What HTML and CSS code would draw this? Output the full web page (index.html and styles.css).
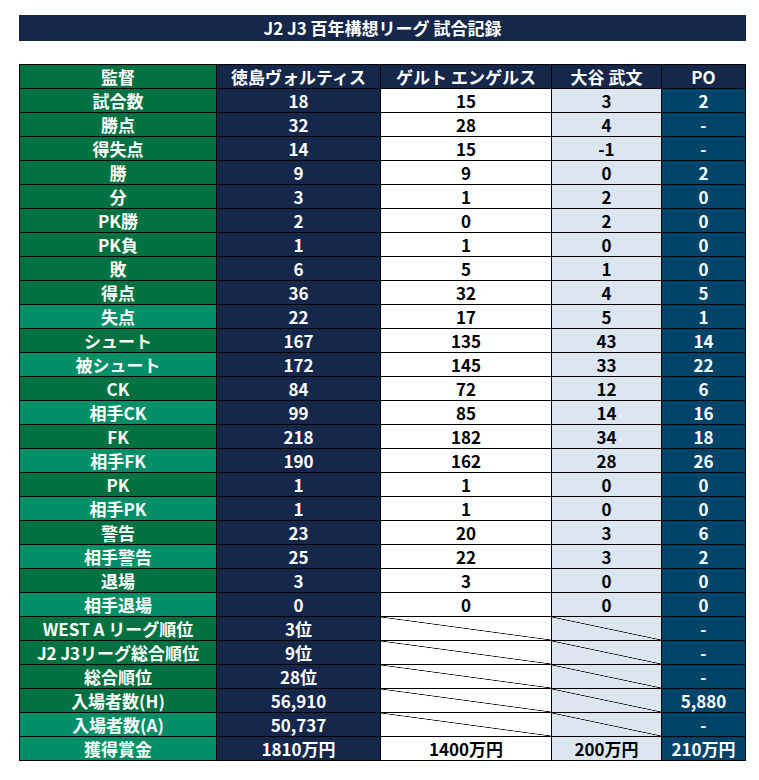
FILE: index.html
```html
<!DOCTYPE html>
<html lang="ja">
<head>
<meta charset="utf-8">
<title>J2 J3 百年構想リーグ 試合記録</title>
<link rel="stylesheet" href="styles.css">
</head>
<body>
<div class="page">
  <div class="title">J2 J3 百年構想リーグ 試合記録</div>
  <div class="grid">
    <div class="c k">監督</div><div class="c h">徳島ヴォルティス</div><div class="c h">ゲルト エンゲルス</div><div class="c h">大谷 武文</div><div class="c h">PO</div>

    <div class="c k">試合数</div><div class="c t">18</div><div class="c g">15</div><div class="c o">3</div><div class="c p">2</div>
    <div class="c k">勝点</div><div class="c t">32</div><div class="c g">28</div><div class="c o">4</div><div class="c p">-</div>
    <div class="c k">得失点</div><div class="c t">14</div><div class="c g">15</div><div class="c o">-1</div><div class="c p">-</div>
    <div class="c k">勝</div><div class="c t">9</div><div class="c g">9</div><div class="c o">0</div><div class="c p">2</div>
    <div class="c k">分</div><div class="c t">3</div><div class="c g">1</div><div class="c o">2</div><div class="c p">0</div>
    <div class="c k">PK勝</div><div class="c t">2</div><div class="c g">0</div><div class="c o">2</div><div class="c p">0</div>
    <div class="c k">PK負</div><div class="c t">1</div><div class="c g">1</div><div class="c o">0</div><div class="c p">0</div>
    <div class="c k">敗</div><div class="c t">6</div><div class="c g">5</div><div class="c o">1</div><div class="c p">0</div>
    <div class="c k">得点</div><div class="c t">36</div><div class="c g">32</div><div class="c o">4</div><div class="c p">5</div>
    <div class="c l">失点</div><div class="c t">22</div><div class="c g">17</div><div class="c o">5</div><div class="c p">1</div>
    <div class="c k">シュート</div><div class="c t">167</div><div class="c g">135</div><div class="c o">43</div><div class="c p">14</div>
    <div class="c l">被シュート</div><div class="c t">172</div><div class="c g">145</div><div class="c o">33</div><div class="c p">22</div>
    <div class="c k">CK</div><div class="c t">84</div><div class="c g">72</div><div class="c o">12</div><div class="c p">6</div>
    <div class="c l">相手CK</div><div class="c t">99</div><div class="c g">85</div><div class="c o">14</div><div class="c p">16</div>
    <div class="c k">FK</div><div class="c t">218</div><div class="c g">182</div><div class="c o">34</div><div class="c p">18</div>
    <div class="c l">相手FK</div><div class="c t">190</div><div class="c g">162</div><div class="c o">28</div><div class="c p">26</div>
    <div class="c k">PK</div><div class="c t">1</div><div class="c g">1</div><div class="c o">0</div><div class="c p">0</div>
    <div class="c l">相手PK</div><div class="c t">1</div><div class="c g">1</div><div class="c o">0</div><div class="c p">0</div>
    <div class="c k">警告</div><div class="c t">23</div><div class="c g">20</div><div class="c o">3</div><div class="c p">6</div>
    <div class="c l">相手警告</div><div class="c t">25</div><div class="c g">22</div><div class="c o">3</div><div class="c p">2</div>
    <div class="c k">退場</div><div class="c t">3</div><div class="c g">3</div><div class="c o">0</div><div class="c p">0</div>
    <div class="c l">相手退場</div><div class="c t">0</div><div class="c g">0</div><div class="c o">0</div><div class="c p">0</div>
    <div class="c k">WEST A リーグ順位</div><div class="c t">3位</div><div class="c g x"></div><div class="c o x"></div><div class="c p">-</div>
    <div class="c k">J2 J3リーグ総合順位</div><div class="c t">9位</div><div class="c g x"></div><div class="c o x"></div><div class="c p">-</div>
    <div class="c k">総合順位</div><div class="c t">28位</div><div class="c g x"></div><div class="c o x"></div><div class="c p">-</div>
    <div class="c k">入場者数(H)</div><div class="c t">56,910</div><div class="c g x"></div><div class="c o x"></div><div class="c p">5,880</div>
    <div class="c l">入場者数(A)</div><div class="c t">50,737</div><div class="c g x"></div><div class="c o x"></div><div class="c p">-</div>
    <div class="c l">獲得賞金</div><div class="c t">1810万円</div><div class="c g">1400万円</div><div class="c o">200万円</div><div class="c p">210万円</div>
  </div>
</div>
</body>
</html>
```

FILE: styles.css
```css
html, body {
  margin: 0;
  padding: 0;
  background: #ffffff;
}

body {
  font-family: "Noto Sans CJK JP", "Noto Sans", sans-serif;
  font-weight: bold;
}

.page {
  padding: 15px 0 0 19px;
  width: 727px;
}

.title {
  height: 26px;
  line-height: 26px;
  background: #15274a;
  color: #ffffff;
  text-align: center;
  font-size: 17px;
}

.grid {
  margin-top: 23px;
  display: grid;
  grid-template-columns: 196px 163px 170px 109px 83px;
  grid-auto-rows: 23px;
  gap: 1px;
  padding: 1px;
  background: #000000;
}

.c {
  font-size: 17px;
  line-height: 23px;
  text-align: center;
  white-space: nowrap;
  overflow: hidden;
}

.k { background: #007140; color: #ffffff; }
.l { background: #008f67; color: #ffffff; }
.h { background: #15274a; color: #ffffff; }
.t { background: #15274a; color: #ffffff; }
.g { background: #ffffff; color: #000000; }
.o { background: #dce6f1; color: #000000; }
.p { background: #00446a; color: #ffffff; }

.g.x {
  background: linear-gradient(to top right, #ffffff calc(50% - 0.7px), #000000 50%, #ffffff calc(50% + 0.7px));
}

.o.x {
  background: linear-gradient(to top right, #dce6f1 calc(50% - 0.7px), #000000 50%, #dce6f1 calc(50% + 0.7px));
}
```
